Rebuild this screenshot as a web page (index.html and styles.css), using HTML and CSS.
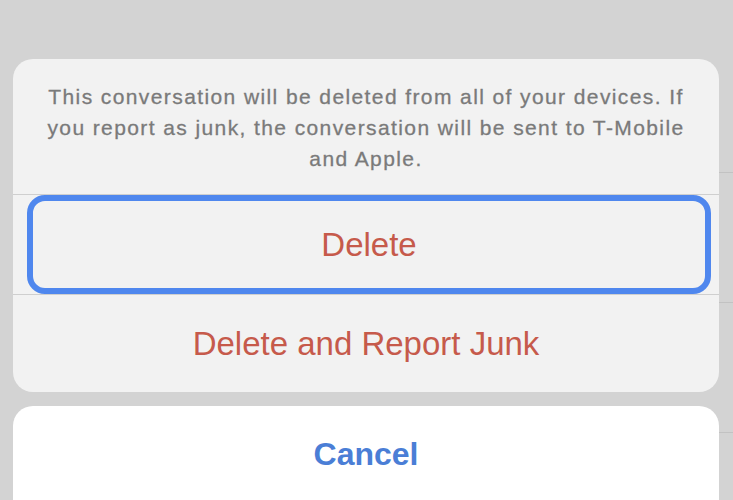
FILE: index.html
```html
<!DOCTYPE html>
<html>
<head>
<meta charset="utf-8">
<link rel="stylesheet" href="styles.css">
</head>
<body>
<div class="backdrop">
  <div class="bg-row"></div>
  <div class="bg-row"></div>
  <div class="bg-row"></div>
</div>
<div class="overlay">
  <div class="sheet">
    <p class="message">This conversation will be deleted from all of your devices. If you report as junk, the conversation will be sent to T-Mobile and Apple.</p>
    <div class="action focused"><span>Delete</span></div>
    <div class="action"><span>Delete and Report Junk</span></div>
  </div>
  <div class="cancel">Cancel</div>
</div>
</body>
</html>
```
FILE: styles.css
```css
html, body {
  margin: 0;
  padding: 0;
}
body {
  width: 733px;
  height: 500px;
  overflow: hidden;
  background: #d3d3d3;
  position: relative;
  font-family: "Liberation Sans", Arial, sans-serif;
}
.backdrop {
  padding-top: 43px;
}
.bg-row {
  height: 129px;
  border-bottom: 1px solid #c2c2c2;
  margin-left: 80px;
}
.overlay {
  position: absolute;
  left: 13px;
  right: 14px;
  top: 59px;
  display: flex;
  flex-direction: column;
  gap: 14px;
}
.sheet {
  background: #f2f2f2;
  border-radius: 20px;
  display: flex;
  flex-direction: column;
}
.message {
  margin: 0;
  padding: 22px 26px 20px;
  text-align: center;
  color: #7a7a7a;
  font-size: 21px;
  letter-spacing: 1.4px;
  line-height: 31px;
  border-bottom: 1px solid #cfcfcf;
  -webkit-text-stroke: 0.3px #7a7a7a;
}
.action {
  height: 98px;
  display: flex;
  align-items: center;
  justify-content: center;
  color: #c65a4b;
  font-size: 33px;
  box-sizing: border-box;
}
.action.focused {
  margin: 0 8px 0 14px;
  height: 99px;
  border: 6px solid #4f87ee;
  border-radius: 18px;
}
.action + .action {
  border-top: 1px solid #cfcfcf;
}
.cancel {
  background: #ffffff;
  border-radius: 20px 20px 0 0;
  height: 95px;
  display: flex;
  justify-content: center;
  padding-top: 30px;
  box-sizing: border-box;
  color: #4a7ed6;
  font-size: 32px;
  font-weight: bold;
}
```
